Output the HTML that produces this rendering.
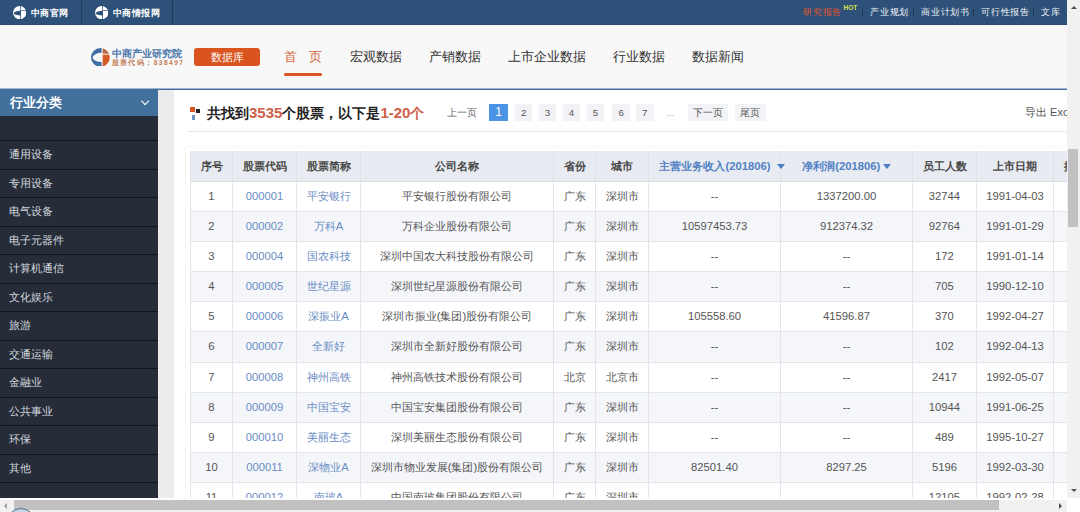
<!DOCTYPE html><html><head><meta charset="utf-8"><style>*{margin:0;padding:0;box-sizing:border-box}
html,body{width:1080px;height:512px;overflow:hidden;background:#fff}
body{position:relative;font-family:"Liberation Sans",sans-serif;color:#333}
#top{position:absolute;left:0;top:0;width:1067px;height:25px;background:#2d5179;border-bottom:1px solid #284a70}
.tl{position:absolute;top:0;height:24px}
.sep{position:absolute;top:0;width:1px;height:24px;background:#1f3b5a}
.ci{position:absolute;left:12.7px;top:5.9px;width:13.3px;height:13.3px}
.tt{position:absolute;top:5.5px;font-size:9.2px;line-height:14px;color:#fff;font-weight:bold;letter-spacing:0.5px;white-space:nowrap}
.tr{position:absolute;top:4.8px;font-size:9.3px;line-height:14px;color:#f2f4f8;font-weight:500;letter-spacing:0.75px;white-space:nowrap}
.tr.red{color:#e4532c}
.hot{position:absolute;top:3.8px;font-size:6.5px;line-height:8px;font-weight:bold;color:#d7e04c}
.bar{position:absolute;top:8.5px;width:1px;height:8px;background:#1c3656}
#hdr{position:absolute;left:0;top:25px;width:1067px;height:63px;background:#f8f8f8}
#logo{position:absolute;left:90.5px;top:23px;width:95px;height:20px}
.lc{position:absolute;left:0.3px;top:-0.5px;width:18.8px;height:18.8px}
.l1{position:absolute;left:21px;top:-0.5px;font-size:10px;line-height:12px;font-weight:bold;color:#4a76aa;white-space:nowrap;letter-spacing:0.1px}
.l2{position:absolute;left:21px;top:11.3px;font-size:6.6px;line-height:8px;font-weight:bold;color:#c47c55;white-space:nowrap;letter-spacing:1.45px}
#sjk{position:absolute;left:194px;top:22.6px;width:66px;height:18.5px;border-radius:3px;background:#d9541e;color:#fff;font-size:11.3px;line-height:18.5px;text-align:center}
.nav{position:absolute;top:22px;font-size:13px;line-height:20px;color:#333;white-space:nowrap}
.nav.on{color:#d5643f}
#ul{position:absolute;left:284px;top:47.6px;width:37.5px;height:3px;border-radius:2px;background:#d9541e}
#bline{position:absolute;left:0;top:88px;width:1067px;height:2px;background:linear-gradient(#9fb5d3 0 1px,#46699a 1px 2px)}
#side{position:absolute;left:0;top:89px;width:158px;height:409px;background:#262d39}
#shd{position:absolute;left:0;top:0;width:158px;height:28px;border-bottom:1px solid #1f2a3a;background:#42709c;color:#fff;font-size:12.5px;line-height:29px;padding-left:9.6px;font-weight:bold}
#chev{position:absolute;left:141.8px;top:8.6px;width:6.3px;height:6.3px;border-right:1.3px solid #fff;border-bottom:1.3px solid #fff;transform:rotate(45deg)}
.si{position:absolute;left:0;width:158px;height:28.5px;border-top:1px solid #12161c;color:#d3d7de;font-size:11px;line-height:26px;padding-left:9.2px}
#gap{position:absolute;left:158px;top:90px;width:16px;height:408px;background:#ececec}
#panel{position:absolute;left:174px;top:90px;width:893px;height:408px;background:#fff}
#ticon{position:absolute;left:190px;top:107px;width:12px;height:13px}
#ticon i{position:absolute;display:block}
#ticon .o{left:0;top:0;width:4.5px;height:4.5px;background:#d9541e}
#ticon .d{left:6px;top:2px;width:4px;height:3.5px;background:#222}
#ticon .b{left:2.2px;top:8px;width:2.8px;height:4.5px;background:#6f97bd}
#title{position:absolute;left:207px;top:101.5px;font-size:14px;line-height:22px;font-weight:bold;color:#222;white-space:nowrap}
#title em{font-style:normal;font-weight:bold;color:#d0604a;font-size:15px}#title em.c{font-size:14px}
.pt{position:absolute;top:104.2px;height:17.3px;font-size:9.75px;line-height:17px;color:#666;white-space:nowrap}
.pb{position:absolute;top:104.2px;width:17.6px;height:17.3px;background:#f2f3f6;font-size:9.75px;line-height:17.3px;color:#555;text-align:center;white-space:nowrap}
.pb.on{background:#4b93e4;color:#fff;font-size:12px}
#exp{position:absolute;left:1025px;top:103.5px;font-size:11px;line-height:17px;color:#555;white-space:nowrap;width:42px;overflow:hidden}
#dash{position:absolute;left:189px;top:131px;width:878px;height:1px;background:repeating-linear-gradient(to right,#e0e0e0 0 3px,#f7f7f7 3px 4px)}
#tbl{position:absolute;left:190px;top:151px;width:877px;height:347px;overflow:hidden}
.th{position:absolute;top:0;height:30px;font-size:11.25px;line-height:30px;font-weight:bold;color:#484848;text-align:center;white-space:nowrap;overflow:hidden}
.th.sort{color:#5282c4}.th.l{text-align:left;padding-left:10.4px;overflow:visible;z-index:2}
.tri{display:inline-block;width:0;height:0;border-left:4px solid transparent;border-right:4px solid transparent;border-top:5.5px solid #4a7dc2;vertical-align:1px;margin-left:1.5px}
.tr_{position:absolute;left:0;width:877px}.thbg{position:absolute;left:0;width:877px;background:#e8ebf2}.hl{position:absolute;left:0;width:877px;height:1px;background:#e2e5eb}.hl.hh{background:#dcdfe7}
.odd{background:#fff}.even{background:#f4f6fa}
.td{position:absolute;font-size:11.25px;line-height:28px;color:#555;text-align:center;white-space:nowrap;overflow:hidden}
.td.lnk{color:#6a8cc4}
.vl{position:absolute;top:31px;width:1px;height:316px;background:#e2e4e9}.vlh{position:absolute;top:0;width:1px;height:30px;background:#e0e3ea}
#vs{position:absolute;left:1067px;top:0;width:13px;height:498px;background:#f1f1f1}
#vth{position:absolute;left:1px;top:149.2px;width:10px;height:77.4px;background:#c1c1c1}
#vs .up{position:absolute;left:3.5px;top:5.5px;width:0;height:0;border-left:3px solid transparent;border-right:3px solid transparent;border-bottom:3.5px solid #505050}
#vs .dn{position:absolute;left:3.5px;top:489px;width:0;height:0;border-left:3px solid transparent;border-right:3px solid transparent;border-top:3.5px solid #505050}
#hs{position:absolute;left:0;top:499.5px;width:1067px;height:12.5px;background:#f1f1f1}
#hth{position:absolute;left:13.5px;top:0.5px;width:985px;height:10px;background:#c1c1c1}
#hs .lf{position:absolute;left:4px;top:3px;width:0;height:0;border-top:3px solid transparent;border-bottom:3px solid transparent;border-right:3.5px solid #a0a0a0}
#hs .rt{position:absolute;left:1058.5px;top:3px;width:0;height:0;border-top:3px solid transparent;border-bottom:3px solid transparent;border-left:3.5px solid #505050}
#corner{position:absolute;left:1067px;top:498px;width:13px;height:14px;background:#fff}
#circ{position:absolute;left:7px;top:507.6px;width:28px;height:28px;border-radius:50%;border:1px solid #4f6a85;background:#c6d6e6}

#tbox{position:absolute;left:185px;top:146px;width:900px;height:400px;border:1px solid #f5f5f5}</style></head><body>
<div id="top">
<div class="tl" style="left:0;width:81px"><svg class="ci" viewBox="0 0 20 20"><defs><clipPath id="ct"><circle cx="10" cy="10" r="10"/></clipPath></defs><g clip-path="url(#ct)"><rect x="0" y="0" width="10.9" height="20" fill="#fff"/><ellipse cx="11.5" cy="10.8" rx="10.1" ry="3.6" fill="#2d5179"/><rect x="12" y="0" width="9" height="6.4" fill="#fff"/><rect x="12" y="7.4" width="9" height="13" fill="#fff"/></g></svg><span class="tt" style="left:30.5px">中商官网</span></div>
<div class="sep" style="left:81px"></div>
<div class="tl" style="left:82px;width:90px"><svg class="ci" viewBox="0 0 20 20"><defs><clipPath id="ct"><circle cx="10" cy="10" r="10"/></clipPath></defs><g clip-path="url(#ct)"><rect x="0" y="0" width="10.9" height="20" fill="#fff"/><ellipse cx="11.5" cy="10.8" rx="10.1" ry="3.6" fill="#2d5179"/><rect x="12" y="0" width="9" height="6.4" fill="#fff"/><rect x="12" y="7.4" width="9" height="13" fill="#fff"/></g></svg><span class="tt" style="left:30.5px">中商情报网</span></div>
<div class="sep" style="left:172px"></div>
<span class="tr red" style="left:803px">研究报告</span><span class="hot" style="left:843.6px">HOT</span>
<span class="bar" style="left:862px"></span>
<span class="tr" style="left:870px">产业规划</span>
<span class="bar" style="left:913.3px"></span>
<span class="tr" style="left:921px">商业计划书</span>
<span class="bar" style="left:973.3px"></span>
<span class="tr" style="left:981px">可行性报告</span>
<span class="bar" style="left:1033.3px"></span>
<span class="tr" style="left:1041px">文库</span>
</div>
<div id="hdr">
<div id="logo"><svg class="lc" viewBox="0 0 20 20"><defs><clipPath id="cc"><circle cx="10" cy="10" r="10"/></clipPath></defs><g clip-path="url(#cc)"><rect x="0" y="0" width="11.3" height="20" fill="#3f6fa3"/><ellipse cx="11.6" cy="10" rx="9.8" ry="4.9" fill="#f8f8f8"/><rect x="12.4" y="7.1" width="9" height="14" fill="#d65a26"/><rect x="12.4" y="0" width="9" height="6.1" fill="#b86a4c"/></g></svg><span class="l1">中商产业研究院</span><span class="l2">股票代码：838497</span></div>
<div id="sjk">数据库</div>
<span class="nav on" style="left:284px">首<span style="margin-left:12px">页</span></span><span id="ul"></span>
<span class="nav" style="left:350px">宏观数据</span>
<span class="nav" style="left:429.3px">产销数据</span>
<span class="nav" style="left:508.3px">上市企业数据</span>
<span class="nav" style="left:612.7px">行业数据</span>
<span class="nav" style="left:691.7px">数据新闻</span>
</div>
<div id="bline"></div>
<div id="side"><div id="shd">行业分类<span id="chev"></span></div><div id="sempty"></div>
<div class="si" style="top:51.0px">通用设备</div>
<div class="si" style="top:79.5px">专用设备</div>
<div class="si" style="top:108.0px">电气设备</div>
<div class="si" style="top:136.5px">电子元器件</div>
<div class="si" style="top:165.0px">计算机通信</div>
<div class="si" style="top:193.5px">文化娱乐</div>
<div class="si" style="top:222.0px">旅游</div>
<div class="si" style="top:250.5px">交通运输</div>
<div class="si" style="top:279.0px">金融业</div>
<div class="si" style="top:307.5px">公共事业</div>
<div class="si" style="top:336.0px">环保</div>
<div class="si" style="top:364.5px">其他</div>
<div class="si" style="top:393px;height:16px"></div>
</div>
<div id="gap"></div><div id="panel"></div>
<div id="ticon"><i class="o"></i><i class="d"></i><i class="b"></i></div>
<div id="title">共找到<em>3535</em>个股票，以下是<em>1-20</em><em class="c">个</em></div>
<div id="pg">
<span class="pt" style="left:447.4px">上一页</span>
<span class="pb on" style="left:489px;width:19px">1</span>
<span class="pb" style="left:514.8px">2</span>
<span class="pb" style="left:538.6px">3</span>
<span class="pb" style="left:562.7px">4</span>
<span class="pb" style="left:586.7px">5</span>
<span class="pb" style="left:612.3px">6</span>
<span class="pb" style="left:636px">7</span>
<span class="pt" style="left:663.5px;width:14px;text-align:center;color:#aaa">...</span>
<span class="pb" style="left:687.5px;width:40.8px">下一页</span>
<span class="pb" style="left:734.7px;width:31.1px">尾页</span>
</div>
<div id="exp">导出 Excel</div>
<div id="dash"></div>
<div id="tbox"></div>
<div id="tbl">
<div class="thbg" style="top:0;height:30px"></div><div class="hl hh" style="top:30px"></div>
<div class="th" style="left:1px;width:41px">序号</div>
<div class="th" style="left:43px;width:63px">股票代码</div>
<div class="th" style="left:107px;width:63px">股票简称</div>
<div class="th" style="left:171px;width:192px">公司名称</div>
<div class="th" style="left:364px;width:41px">省份</div>
<div class="th" style="left:406px;width:52px">城市</div>
<div class="th sort l" style="left:459px;width:131px">主营业务收入(201806) <b class="tri" style="margin-left:3px"></b></div>
<div class="th sort" style="left:591px;width:131px">净利润(201806)<b class="tri" style="margin-left:2.5px"></b></div>
<div class="th" style="left:723px;width:63px">员工人数</div>
<div class="th" style="left:787px;width:76px">上市日期</div>
<div class="th l" style="left:864px;width:86px">排名</div>
<div class="tr_ odd" style="top:31px;height:29px"></div><div class="hl" style="top:60px"></div>
<div class="td" style="left:1px;width:41px;top:31px;height:29px">1</div>
<div class="td lnk" style="left:43px;width:63px;top:31px;height:29px">000001</div>
<div class="td lnk" style="left:107px;width:63px;top:31px;height:29px">平安银行</div>
<div class="td" style="left:171px;width:192px;top:31px;height:29px">平安银行股份有限公司</div>
<div class="td" style="left:364px;width:41px;top:31px;height:29px">广东</div>
<div class="td" style="left:406px;width:52px;top:31px;height:29px">深圳市</div>
<div class="td" style="left:459px;width:131px;top:31px;height:29px">--</div>
<div class="td" style="left:591px;width:131px;top:31px;height:29px">1337200.00</div>
<div class="td" style="left:723px;width:63px;top:31px;height:29px">32744</div>
<div class="td" style="left:787px;width:76px;top:31px;height:29px">1991-04-03</div>
<div class="td" style="left:864px;width:86px;top:31px;height:29px"></div>
<div class="tr_ even" style="top:61px;height:29px"></div><div class="hl" style="top:90px"></div>
<div class="td" style="left:1px;width:41px;top:61px;height:29px">2</div>
<div class="td lnk" style="left:43px;width:63px;top:61px;height:29px">000002</div>
<div class="td lnk" style="left:107px;width:63px;top:61px;height:29px">万科A</div>
<div class="td" style="left:171px;width:192px;top:61px;height:29px">万科企业股份有限公司</div>
<div class="td" style="left:364px;width:41px;top:61px;height:29px">广东</div>
<div class="td" style="left:406px;width:52px;top:61px;height:29px">深圳市</div>
<div class="td" style="left:459px;width:131px;top:61px;height:29px">10597453.73</div>
<div class="td" style="left:591px;width:131px;top:61px;height:29px">912374.32</div>
<div class="td" style="left:723px;width:63px;top:61px;height:29px">92764</div>
<div class="td" style="left:787px;width:76px;top:61px;height:29px">1991-01-29</div>
<div class="td" style="left:864px;width:86px;top:61px;height:29px"></div>
<div class="tr_ odd" style="top:91px;height:29px"></div><div class="hl" style="top:120px"></div>
<div class="td" style="left:1px;width:41px;top:91px;height:29px">3</div>
<div class="td lnk" style="left:43px;width:63px;top:91px;height:29px">000004</div>
<div class="td lnk" style="left:107px;width:63px;top:91px;height:29px">国农科技</div>
<div class="td" style="left:171px;width:192px;top:91px;height:29px">深圳中国农大科技股份有限公司</div>
<div class="td" style="left:364px;width:41px;top:91px;height:29px">广东</div>
<div class="td" style="left:406px;width:52px;top:91px;height:29px">深圳市</div>
<div class="td" style="left:459px;width:131px;top:91px;height:29px">--</div>
<div class="td" style="left:591px;width:131px;top:91px;height:29px">--</div>
<div class="td" style="left:723px;width:63px;top:91px;height:29px">172</div>
<div class="td" style="left:787px;width:76px;top:91px;height:29px">1991-01-14</div>
<div class="td" style="left:864px;width:86px;top:91px;height:29px"></div>
<div class="tr_ even" style="top:121px;height:29px"></div><div class="hl" style="top:150px"></div>
<div class="td" style="left:1px;width:41px;top:121px;height:29px">4</div>
<div class="td lnk" style="left:43px;width:63px;top:121px;height:29px">000005</div>
<div class="td lnk" style="left:107px;width:63px;top:121px;height:29px">世纪星源</div>
<div class="td" style="left:171px;width:192px;top:121px;height:29px">深圳世纪星源股份有限公司</div>
<div class="td" style="left:364px;width:41px;top:121px;height:29px">广东</div>
<div class="td" style="left:406px;width:52px;top:121px;height:29px">深圳市</div>
<div class="td" style="left:459px;width:131px;top:121px;height:29px">--</div>
<div class="td" style="left:591px;width:131px;top:121px;height:29px">--</div>
<div class="td" style="left:723px;width:63px;top:121px;height:29px">705</div>
<div class="td" style="left:787px;width:76px;top:121px;height:29px">1990-12-10</div>
<div class="td" style="left:864px;width:86px;top:121px;height:29px"></div>
<div class="tr_ odd" style="top:151px;height:29px"></div><div class="hl" style="top:180px"></div>
<div class="td" style="left:1px;width:41px;top:151px;height:29px">5</div>
<div class="td lnk" style="left:43px;width:63px;top:151px;height:29px">000006</div>
<div class="td lnk" style="left:107px;width:63px;top:151px;height:29px">深振业A</div>
<div class="td" style="left:171px;width:192px;top:151px;height:29px">深圳市振业(集团)股份有限公司</div>
<div class="td" style="left:364px;width:41px;top:151px;height:29px">广东</div>
<div class="td" style="left:406px;width:52px;top:151px;height:29px">深圳市</div>
<div class="td" style="left:459px;width:131px;top:151px;height:29px">105558.60</div>
<div class="td" style="left:591px;width:131px;top:151px;height:29px">41596.87</div>
<div class="td" style="left:723px;width:63px;top:151px;height:29px">370</div>
<div class="td" style="left:787px;width:76px;top:151px;height:29px">1992-04-27</div>
<div class="td" style="left:864px;width:86px;top:151px;height:29px"></div>
<div class="tr_ even" style="top:181px;height:30px"></div><div class="hl" style="top:211px"></div>
<div class="td" style="left:1px;width:41px;top:181px;height:30px">6</div>
<div class="td lnk" style="left:43px;width:63px;top:181px;height:30px">000007</div>
<div class="td lnk" style="left:107px;width:63px;top:181px;height:30px">全新好</div>
<div class="td" style="left:171px;width:192px;top:181px;height:30px">深圳市全新好股份有限公司</div>
<div class="td" style="left:364px;width:41px;top:181px;height:30px">广东</div>
<div class="td" style="left:406px;width:52px;top:181px;height:30px">深圳市</div>
<div class="td" style="left:459px;width:131px;top:181px;height:30px">--</div>
<div class="td" style="left:591px;width:131px;top:181px;height:30px">--</div>
<div class="td" style="left:723px;width:63px;top:181px;height:30px">102</div>
<div class="td" style="left:787px;width:76px;top:181px;height:30px">1992-04-13</div>
<div class="td" style="left:864px;width:86px;top:181px;height:30px"></div>
<div class="tr_ odd" style="top:212px;height:29px"></div><div class="hl" style="top:241px"></div>
<div class="td" style="left:1px;width:41px;top:212px;height:29px">7</div>
<div class="td lnk" style="left:43px;width:63px;top:212px;height:29px">000008</div>
<div class="td lnk" style="left:107px;width:63px;top:212px;height:29px">神州高铁</div>
<div class="td" style="left:171px;width:192px;top:212px;height:29px">神州高铁技术股份有限公司</div>
<div class="td" style="left:364px;width:41px;top:212px;height:29px">北京</div>
<div class="td" style="left:406px;width:52px;top:212px;height:29px">北京市</div>
<div class="td" style="left:459px;width:131px;top:212px;height:29px">--</div>
<div class="td" style="left:591px;width:131px;top:212px;height:29px">--</div>
<div class="td" style="left:723px;width:63px;top:212px;height:29px">2417</div>
<div class="td" style="left:787px;width:76px;top:212px;height:29px">1992-05-07</div>
<div class="td" style="left:864px;width:86px;top:212px;height:29px"></div>
<div class="tr_ even" style="top:242px;height:29px"></div><div class="hl" style="top:271px"></div>
<div class="td" style="left:1px;width:41px;top:242px;height:29px">8</div>
<div class="td lnk" style="left:43px;width:63px;top:242px;height:29px">000009</div>
<div class="td lnk" style="left:107px;width:63px;top:242px;height:29px">中国宝安</div>
<div class="td" style="left:171px;width:192px;top:242px;height:29px">中国宝安集团股份有限公司</div>
<div class="td" style="left:364px;width:41px;top:242px;height:29px">广东</div>
<div class="td" style="left:406px;width:52px;top:242px;height:29px">深圳市</div>
<div class="td" style="left:459px;width:131px;top:242px;height:29px">--</div>
<div class="td" style="left:591px;width:131px;top:242px;height:29px">--</div>
<div class="td" style="left:723px;width:63px;top:242px;height:29px">10944</div>
<div class="td" style="left:787px;width:76px;top:242px;height:29px">1991-06-25</div>
<div class="td" style="left:864px;width:86px;top:242px;height:29px"></div>
<div class="tr_ odd" style="top:272px;height:29px"></div><div class="hl" style="top:301px"></div>
<div class="td" style="left:1px;width:41px;top:272px;height:29px">9</div>
<div class="td lnk" style="left:43px;width:63px;top:272px;height:29px">000010</div>
<div class="td lnk" style="left:107px;width:63px;top:272px;height:29px">美丽生态</div>
<div class="td" style="left:171px;width:192px;top:272px;height:29px">深圳美丽生态股份有限公司</div>
<div class="td" style="left:364px;width:41px;top:272px;height:29px">广东</div>
<div class="td" style="left:406px;width:52px;top:272px;height:29px">深圳市</div>
<div class="td" style="left:459px;width:131px;top:272px;height:29px">--</div>
<div class="td" style="left:591px;width:131px;top:272px;height:29px">--</div>
<div class="td" style="left:723px;width:63px;top:272px;height:29px">489</div>
<div class="td" style="left:787px;width:76px;top:272px;height:29px">1995-10-27</div>
<div class="td" style="left:864px;width:86px;top:272px;height:29px"></div>
<div class="tr_ even" style="top:302px;height:29px"></div><div class="hl" style="top:331px"></div>
<div class="td" style="left:1px;width:41px;top:302px;height:29px">10</div>
<div class="td lnk" style="left:43px;width:63px;top:302px;height:29px">000011</div>
<div class="td lnk" style="left:107px;width:63px;top:302px;height:29px">深物业A</div>
<div class="td" style="left:171px;width:192px;top:302px;height:29px">深圳市物业发展(集团)股份有限公司</div>
<div class="td" style="left:364px;width:41px;top:302px;height:29px">广东</div>
<div class="td" style="left:406px;width:52px;top:302px;height:29px">深圳市</div>
<div class="td" style="left:459px;width:131px;top:302px;height:29px">82501.40</div>
<div class="td" style="left:591px;width:131px;top:302px;height:29px">8297.25</div>
<div class="td" style="left:723px;width:63px;top:302px;height:29px">5196</div>
<div class="td" style="left:787px;width:76px;top:302px;height:29px">1992-03-30</div>
<div class="td" style="left:864px;width:86px;top:302px;height:29px"></div>
<div class="tr_ odd" style="top:332px;height:29px"></div><div class="hl" style="top:361px"></div>
<div class="td" style="left:1px;width:41px;top:332px;height:29px">11</div>
<div class="td lnk" style="left:43px;width:63px;top:332px;height:29px">000012</div>
<div class="td lnk" style="left:107px;width:63px;top:332px;height:29px">南玻A</div>
<div class="td" style="left:171px;width:192px;top:332px;height:29px">中国南玻集团股份有限公司</div>
<div class="td" style="left:364px;width:41px;top:332px;height:29px">广东</div>
<div class="td" style="left:406px;width:52px;top:332px;height:29px">深圳市</div>
<div class="td" style="left:459px;width:131px;top:332px;height:29px">--</div>
<div class="td" style="left:591px;width:131px;top:332px;height:29px">--</div>
<div class="td" style="left:723px;width:63px;top:332px;height:29px">12105</div>
<div class="td" style="left:787px;width:76px;top:332px;height:29px">1992-02-28</div>
<div class="td" style="left:864px;width:86px;top:332px;height:29px"></div>
<div class="vl" style="left:0px"></div><div class="vlh" style="left:0px"></div>
<div class="vl" style="left:42px"></div><div class="vlh" style="left:42px"></div>
<div class="vl" style="left:106px"></div><div class="vlh" style="left:106px"></div>
<div class="vl" style="left:170px"></div><div class="vlh" style="left:170px"></div>
<div class="vl" style="left:363px"></div><div class="vlh" style="left:363px"></div>
<div class="vl" style="left:405px"></div><div class="vlh" style="left:405px"></div>
<div class="vl" style="left:458px"></div><div class="vlh" style="left:458px"></div>
<div class="vl" style="left:590px"></div><div class="vlh" style="left:590px"></div>
<div class="vl" style="left:722px"></div><div class="vlh" style="left:722px"></div>
<div class="vl" style="left:786px"></div><div class="vlh" style="left:786px"></div>
<div class="vl" style="left:863px"></div><div class="vlh" style="left:863px"></div>
</div>
<div id="vs"><i class="up"></i><div id="vth"></div><i class="dn"></i></div>
<div id="hs"><i class="lf"></i><div id="hth"></div><i class="rt"></i></div>
<div id="corner"></div>
<div id="circ"></div>
</body></html>
